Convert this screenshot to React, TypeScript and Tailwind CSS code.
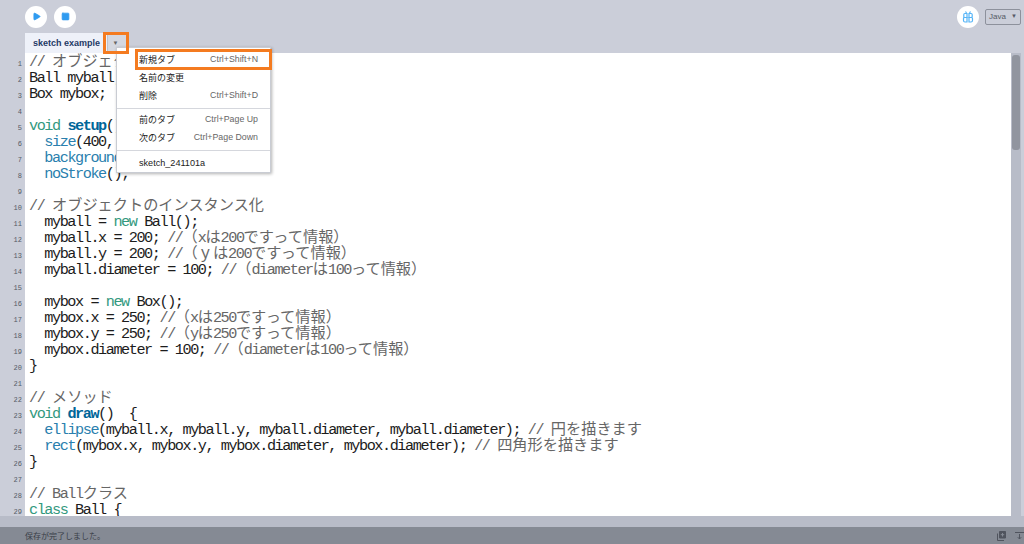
import type { ReactNode } from "react";
import { Play, Square } from "lucide-react";

type Kind = "kw" | "fn" | "def" | "cm" | "tx";
type Tok = [Kind, string];

const colors: Record<Kind, string> = {
  kw: "text-[#33997e]",
  fn: "text-[#2a7fae]",
  def: "text-[#006699] font-bold",
  cm: "text-[#666666]",
  tx: "text-[#1c1c1c]",
};

const t = (s: string): Tok => ["tx", s];
const c = (s: string): Tok => ["cm", s];

const code: Tok[][] = [
  [c("// オブジェクトの宣言")],
  [t("Ball myball;")],
  [t("Box mybox;")],
  [],
  [["kw", "void"], t(" "), ["def", "setup"], t("() {")],
  [t("  "), ["fn", "size"], t("(400, 400);")],
  [t("  "), ["fn", "background"], t("(255);")],
  [t("  "), ["fn", "noStroke"], t("();")],
  [],
  [c("// オブジェクトのインスタンス化")],
  [t("  myball = "), ["kw", "new"], t(" Ball();")],
  [t("  myball.x = 200; "), c("//（xは200ですって情報）")],
  [t("  myball.y = 200; "), c("//（ｙは200ですって情報）")],
  [t("  myball.diameter = 100; "), c("//（diameterは100って情報）")],
  [],
  [t("  mybox = "), ["kw", "new"], t(" Box();")],
  [t("  mybox.x = 250; "), c("//（xは250ですって情報）")],
  [t("  mybox.y = 250; "), c("//（yは250ですって情報）")],
  [t("  mybox.diameter = 100; "), c("//（diameterは100って情報）")],
  [t("}")],
  [],
  [c("// メソッド")],
  [["kw", "void"], t(" "), ["def", "draw"], t("()  {")],
  [t("  "), ["fn", "ellipse"], t("(myball.x, myball.y, myball.diameter, myball.diameter); "), c("// 円を描きます")],
  [t("  "), ["fn", "rect"], t("(mybox.x, mybox.y, mybox.diameter, mybox.diameter); "), c("// 四角形を描きます")],
  [t("}")],
  [],
  [c("// Ballクラス")],
  [["kw", "class"], t(" Ball {")],
];

// half-width runs need a tighter mono than the CJK runs, so split them apart
function Run({ kind, text }: { kind: Kind; text: string }) {
  const parts = text.match(/[\x20-\x7e]+|[^\x20-\x7e]+/g) ?? [];
  return (
    <>
      {parts.map((p, i) =>
        /^[\x20-\x7e]/.test(p) ? (
          <span key={i} className={`${colors[kind]} font-['Liberation_Mono',monospace] text-[15.2px] tracking-[-1.44px]`}>
            {p}
          </span>
        ) : (
          <span key={i} className={`${colors[kind]} font-['Noto_Sans_CJK_JP',sans-serif] text-[15.2px] leading-[1px]`}>
            {p}
          </span>
        ),
      )}
    </>
  );
}

function MenuItem({ label, keys }: { label: string; keys?: string }) {
  return (
    <div className="flex h-[18px] items-center justify-between pl-[22px] pr-[12px]">
      <span className="font-['Noto_Sans_CJK_JP',sans-serif] text-[9px] text-[#222222]">{label}</span>
      {keys && <span className="text-[8.8px] text-[#666666]">{keys}</span>}
    </div>
  );
}

function RoundButton({ children }: { children: ReactNode }) {
  return <div className="flex h-[22px] w-[22px] items-center justify-center rounded-full bg-white">{children}</div>;
}

export default function App() {
  return (
    <div className="relative flex h-[544px] w-[1024px] flex-col overflow-hidden bg-[#cbced9] font-['Liberation_Sans',sans-serif]">
      {/* Toolbar */}
      <div className="flex h-[33px] shrink-0 items-center justify-between pl-[25px] pr-[3px]">
        <div className="flex gap-[7px]">
          <RoundButton>
            <Play size={9} className="fill-[#2f9bf0] text-[#2f9bf0]" />
          </RoundButton>
          <RoundButton>
            <Square size={9} className="fill-[#2f9bf0] text-[#2f9bf0]" />
          </RoundButton>
        </div>
        <div className="flex items-center gap-[6px]">
          <RoundButton>
            <svg width="14" height="14" viewBox="0 0 14 14" fill="none" stroke="#55b4f7" strokeWidth="1.2">
              <path d="M4.500 1.500l1 1.500M9.500 1.500l-1 1.500" />
              <path d="M6 3.500H3.800C3 3.500 2.800 4 2.800 4.700V6.500c0 .6.400 1 1 1H6zM8 3.500h2.200c.8 0 1 .5 1 1.200v1.800c0 .6-.4 1-1 1H8z" />
              <path d="M6 7.500H3.500c-.6 0-1 .4-1 1v2c0 1 .8 1.500 1.500 1.500H6zM8 7.500h2.500c.6 0 1 .4 1 1v2c0 1-.8 1.500-1.500 1.500H8z" />
            </svg>
          </RoundButton>
          <div className="flex h-[16px] w-[36px] items-center justify-center gap-[5px] rounded-[2px] border border-[#8d919c] text-[8px] text-[#555a66]">
            <span>Java</span>
            <span className="text-[6px]">▼</span>
          </div>
        </div>
      </div>

      {/* Tab row */}
      <div className="flex h-[20px] shrink-0 pl-[25px]">
        <div className="flex w-[82px] items-center bg-[#eef1f9] pl-[8px] pt-[1px] text-[9px] font-bold text-[#1e3a66]">sketch example</div>
        <div className="flex w-[19px] items-center justify-center border-l border-[#bfc2cc] bg-[#d5d8e0] pr-[3px] text-[6px] text-[#666666]">▼</div>
      </div>

      {/* Editor */}
      <div className="flex min-h-0 flex-1">
        <div className="w-[25px] shrink-0 pt-[3px]">
          {code.map((_, i) => (
            <div key={i} className="h-[16px] pr-[3px] text-right font-['Liberation_Mono',monospace] text-[7px] leading-[17px] text-[#555a66]">
              {i + 1}
            </div>
          ))}
        </div>
        <div className="w-[986px] shrink-0 overflow-hidden bg-white pl-[4px]">
          {code.map((line, i) => (
            <div key={i} className="h-[16px] whitespace-pre leading-[16px]">
              {line.map(([kind, text], j) => (
                <Run key={j} kind={kind} text={text} />
              ))}
            </div>
          ))}
        </div>
        <div className="w-[10px] shrink-0 bg-[#b8bcc8] px-[1px] pt-[2px]">
          <div className="h-[95px] rounded-[3px] bg-[#91959f]" />
        </div>
      </div>

      {/* Strip and status bar */}
      <div className="h-[11px] shrink-0 bg-[#b8bcc8]" />
      <div className="flex h-[17px] shrink-0 items-center justify-between bg-[#858a94] pl-[25px]">
        <span className="font-['Noto_Sans_CJK_JP',sans-serif] text-[8px] text-[#3a3e48]">保存が完了しました。</span>
        <div className="flex items-center gap-[9px]">
          <svg width="9" height="10" viewBox="0 0 9 10" fill="none" stroke="#50545e" strokeWidth="1">
            <path d="M.5 2.500v7h6.500" />
            <path d="M2.500 .5h6v6.500h-6z" fill="#50545e" />
            <path d="M5.500 2v3.500M3.800 3.700h3.400" stroke="#858a94" />
          </svg>
          <svg width="9" height="10" viewBox="0 0 9 10" fill="none" stroke="#50545e" strokeWidth="1">
            <path d="M0 1.500h9M4.500 3v5M2.800 6.200l1.700 1.800 1.700-1.800" />
          </svg>
        </div>
      </div>

      {/* Dropdown menu */}
      <div className="absolute left-[116px] top-[47px] h-[126px] w-[155px] border border-[#c9ccd3] bg-white pt-[3px] shadow-[1px_1px_3px_rgba(0,0,0,0.3)]">
        <MenuItem label="新規タブ" keys="Ctrl+Shift+N" />
        <MenuItem label="名前の変更" />
        <MenuItem label="削除" keys="Ctrl+Shift+D" />
        <div className="mb-[2px] mt-[3px] h-px bg-[#d5d7dd]" />
        <MenuItem label="前のタブ" keys="Ctrl+Page Up" />
        <MenuItem label="次のタブ" keys="Ctrl+Page Down" />
        <div className="mb-[4px] mt-[3px] h-px bg-[#d5d7dd]" />
        <div className="flex h-[18px] items-center pl-[22px] text-[9.100px] text-[#222222]">sketch_241101a</div>
      </div>

      {/* Orange annotation boxes */}
      <div className="absolute left-[103px] top-[32px] h-[22px] w-[26px] border-[3px] border-[#f47b20]" />
      <div className="absolute left-[135px] top-[49px] h-[21px] w-[137px] border-[3px] border-[#f47b20]" />
    </div>
  );
}
